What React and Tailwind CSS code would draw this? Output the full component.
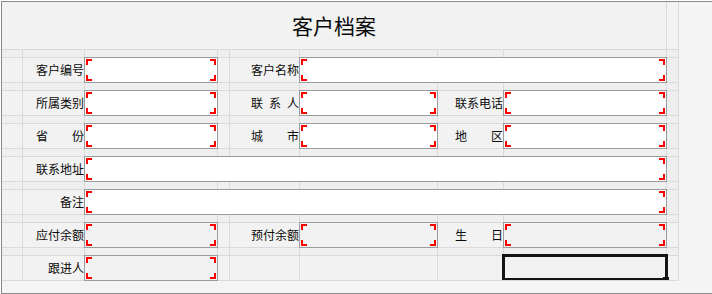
import React from "react";

const FONT = { fontFamily: '"Noto Sans CJK SC", "Noto Sans", sans-serif' };

// each row: 9 columns in the grid, items carry a span
const rows = [
  [
    { t: "e" },
    { t: "l", text: "客户编号" },
    { t: "i" },
    { t: "e" },
    { t: "l", text: "客户名称" },
    { t: "i", span: 3 },
    { t: "e", dark: true },
  ],
  [
    { t: "e" },
    { t: "l", text: "所属类别" },
    { t: "i" },
    { t: "e" },
    { t: "l", text: "联系人", spread: true },
    { t: "i" },
    { t: "l", text: "联系电话" },
    { t: "i" },
    { t: "e", dark: true },
  ],
  [
    { t: "e" },
    { t: "l", text: "省份", spread: true },
    { t: "i" },
    { t: "e" },
    { t: "l", text: "城市", spread: true },
    { t: "i" },
    { t: "l", text: "地区", spread: true },
    { t: "i" },
    { t: "e", dark: true },
  ],
  [
    { t: "e" },
    { t: "l", text: "联系地址" },
    { t: "i", span: 6 },
    { t: "e", dark: true },
  ],
  [
    { t: "e" },
    { t: "l", text: "备注" },
    { t: "i", span: 6 },
    { t: "e", dark: true },
  ],
  [
    { t: "e" },
    { t: "l", text: "应付余额" },
    { t: "i", ro: true },
    { t: "e" },
    { t: "l", text: "预付余额" },
    { t: "i", ro: true },
    { t: "l", text: "生日", spread: true },
    { t: "i", ro: true },
    { t: "e" },
  ],
  [
    { t: "e" },
    { t: "l", text: "跟进人" },
    { t: "i", ro: true },
    { t: "e" },
    { t: "e" },
    { t: "e" },
    { t: "e" },
    { t: "s" },
    { t: "e" },
  ],
];

const spanClass = { 1: "", 3: "col-span-3", 6: "col-span-6" };

function Corners() {
  return (
    <>
      <span className="absolute top-px left-px w-[6px] h-[6px] border-t-2 border-l-2 border-[#ff0000]" />
      <span className="absolute top-px right-px w-[6px] h-[6px] border-t-2 border-r-2 border-[#ff0000]" />
      <span className="absolute bottom-px left-px w-[6px] h-[6px] border-b-2 border-l-2 border-[#ff0000]" />
      <span className="absolute bottom-px right-px w-[6px] h-[6px] border-b-2 border-r-2 border-[#ff0000]" />
    </>
  );
}

function Cell({ item }) {
  const span = spanClass[item.span || 1];
  if (item.t === "l") {
    return (
      <div className={`bg-[#f2f2f2] flex items-center justify-end text-[12px] leading-none text-[#0a0a0a] ${span}`}>
        {item.spread ? (
          <span className="w-[48px] flex justify-between">
            {item.text.split("").map((c, i) => (
              <span key={i}>{c}</span>
            ))}
          </span>
        ) : (
          <span>{item.text}</span>
        )}
      </div>
    );
  }
  if (item.t === "i") {
    return (
      <div
        className={`relative z-10 -m-px border border-[#9c9c9c] ${
          item.ro ? "bg-[#f2f2f2]" : "bg-white"
        } ${span}`}
      >
        <Corners />
      </div>
    );
  }
  if (item.t === "s") {
    return (
      <div className="relative bg-[#f2f2f2]">
        <div className="absolute -left-[2px] -right-[2px] -top-[2px] bottom-0 z-20 border-[3px] border-b-2 border-[#141414]" />
        <span className="absolute -right-[3px] bottom-0 z-30 w-[6px] h-[3px] bg-[#141414]" />
      </div>
    );
  }
  return <div className={`${item.dark ? "bg-[#eeeeee]" : "bg-[#f2f2f2]"} ${span}`} />;
}

function GapRow() {
  return (
    <>
      {Array.from({ length: 9 }).map((_, i) => (
        <div key={i} className="bg-[#efefef]" />
      ))}
    </>
  );
}

export default function App() {
  return (
    <div className="w-[712px] h-[294px] bg-white" style={FONT}>
      <div className="ml-px mt-px w-[711px] h-[293px] border-l border-t border-b border-[#8a8a8a] bg-[#f4f4f4]">
        <div className="w-[677px] grid gap-px bg-[#dadada] border-r border-b border-[#dadada] grid-cols-[20px_61px_132px_11px_69px_137px_65px_162px_11px] grid-rows-[47px_repeat(7,7px_24px)]">
          {/* 标题 */}
          <div className="col-span-8 bg-[#f2f2f2] flex items-center justify-center text-[21px] leading-none text-[#0a0a0a]">
            客户档案
          </div>
          <div className="bg-[#f2f2f2]" />

          {rows.map((row, r) => (
            <React.Fragment key={r}>
              <GapRow />
              {row.map((item, c) => (
                <Cell key={c} item={item} />
              ))}
            </React.Fragment>
          ))}
        </div>
      </div>
    </div>
  );
}
